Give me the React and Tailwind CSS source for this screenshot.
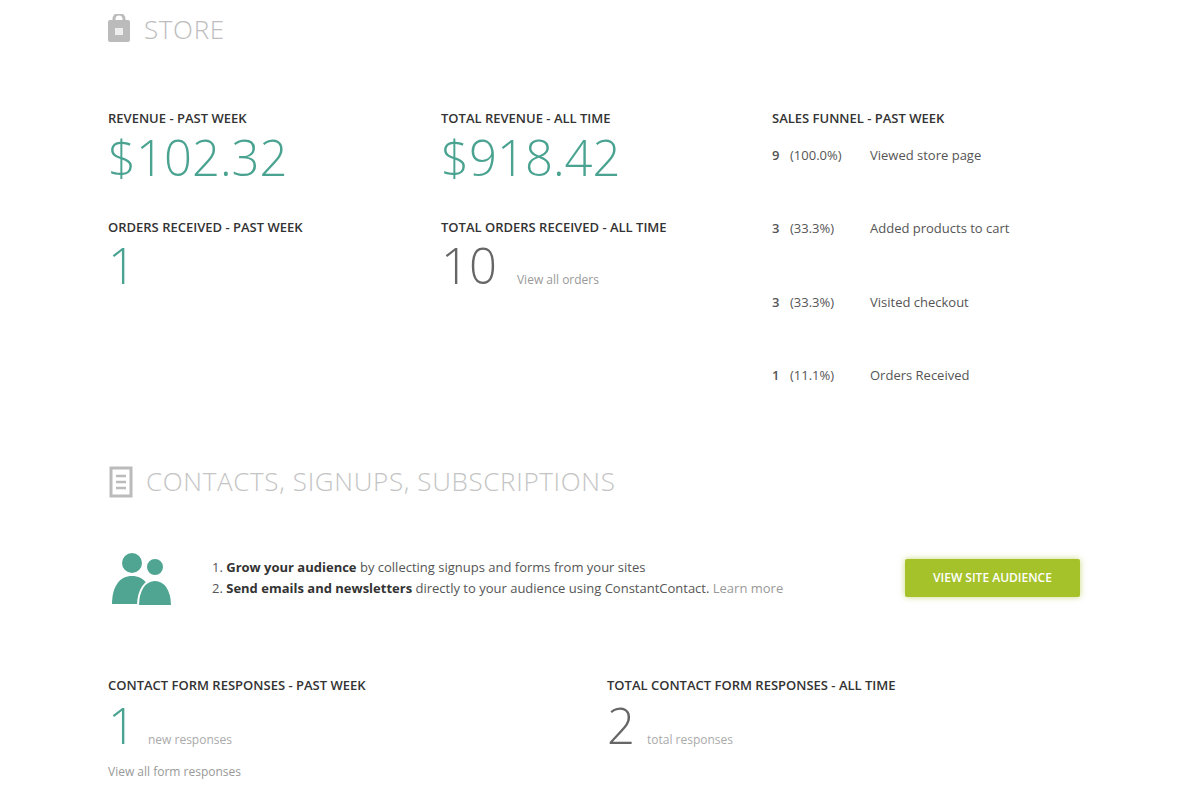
export default function App() {
  const f = { fontFamily: '"Open Sans", "Liberation Sans", sans-serif' };
  const funnel = [
    ["9", "(100.0%)", "Viewed store page"],
    ["3", "(33.3%)", "Added products to cart"],
    ["3", "(33.3%)", "Visited checkout"],
    ["1", "(11.1%)", "Orders Received"],
  ];
  return (
    <div style={f} className="w-[1200px] h-[801px] bg-white overflow-hidden relative pl-[108px] pr-[120px] text-[#333]">
      <div className="flex items-center gap-3 h-[58px] -ml-[2px]">
        <svg width="26" height="30" viewBox="0 0 26 30"><rect x="2" y="6" width="22" height="22" rx="2" fill="#bbb"/><path d="M8 9V5a5 5 0 0 1 10 0v4" stroke="#bbb" strokeWidth="3" fill="none"/><rect x="9" y="14" width="8" height="7" fill="#eee"/></svg>
        <span className="text-[26px] text-[#bdbdbd] tracking-wide font-light">STORE</span>
      </div>
      <div className="flex mt-[51px]">
        <div className="w-[333px]">
          <div className="text-[13px] font-semibold uppercase">Revenue - Past Week</div>
          <div className="text-[49px] font-light text-[#4aa391] leading-[52px] mt-[2px]">$102.32</div>
          <div className="text-[13px] font-semibold uppercase mt-[35px]">Orders Received - Past Week</div>
          <div className="text-[49px] font-light text-[#4aa391] leading-[52px] mt-[2px]">1</div>
        </div>
        <div className="w-[331px]">
          <div className="text-[13px] font-semibold uppercase">Total Revenue - All Time</div>
          <div className="text-[49px] font-light text-[#4aa391] leading-[52px] mt-[2px]">$918.42</div>
          <div className="text-[13px] font-semibold uppercase mt-[35px]">Total Orders Received - All Time</div>
          <div className="flex items-baseline gap-5 mt-[2px]">
            <span className="text-[49px] font-light text-[#666] leading-[52px]">10</span>
            <span className="text-[12px] text-[#999]">View all orders</span>
          </div>
        </div>
        <div>
          <div className="text-[13px] font-semibold uppercase">Sales Funnel - Past Week</div>
          <div className="flex flex-col gap-[54px] mt-[17px]">
            {funnel.map((r) => (
              <div key={r[2]} className="flex text-[13px] text-[#555]">
                <span className="w-[18px] font-semibold">{r[0]}</span>
                <span className="w-[80px]">{r[1]}</span>
                <span>{r[2]}</span>
              </div>
            ))}
          </div>
        </div>
      </div>
      <div className="flex items-center gap-3 mt-[76px] h-[40px]">
        <svg width="26" height="32" viewBox="0 0 26 32"><rect x="3" y="2" width="20" height="28" fill="none" stroke="#bbb" strokeWidth="3"/><path d="M8 10h10M8 16h10M8 22h10" stroke="#bbb" strokeWidth="2.5"/></svg>
        <span className="text-[26px] text-[#c4c4c4] tracking-wide font-light">CONTACTS, SIGNUPS, SUBSCRIPTIONS</span>
      </div>
      <div className="flex items-center mt-[36px] h-[80px]">
        <svg width="72" height="64" viewBox="0 0 72 64"><circle cx="24" cy="17" r="10" fill="#4fa592"/><path d="M4 58c0-18 8-28 20-28s20 10 20 28z" fill="#4fa592"/><circle cx="47" cy="21" r="9" fill="#4fa592" stroke="#fff" strokeWidth="2"/><path d="M30 60c0-16 7-26 17-26s17 10 17 26z" fill="#4fa592" stroke="#fff" strokeWidth="2"/></svg>
        <div className="ml-[32px] text-[13px] text-[#555] leading-[21px] flex-1">
          <div>1. <b className="text-[#333]">Grow your audience</b> by collecting signups and forms from your sites</div>
          <div>2. <b className="text-[#333]">Send emails and newsletters</b> directly to your audience using ConstantContact. <span className="text-[#999]">Learn more</span></div>
        </div>
        <button className="bg-[#a6c22a] text-white text-[12px] font-semibold uppercase px-[16px] h-[38px] w-[175px] rounded-[2px] shadow-[0_0_6px_rgba(166,194,42,0.6)]">View site audience</button>
      </div>
      <div className="flex mt-[58px]">
        <div className="w-[499px]">
          <div className="text-[13px] font-semibold uppercase">Contact Form Responses - Past Week</div>
          <div className="flex items-baseline gap-3 mt-[2px]">
            <span className="text-[49px] font-light text-[#4aa391] leading-[56px]">1</span>
            <span className="text-[12px] text-[#aaa]">new responses</span>
          </div>
          <div className="text-[12px] text-[#999] mt-[10px]">View all form responses</div>
        </div>
        <div>
          <div className="text-[13px] font-semibold uppercase">Total Contact Form Responses - All Time</div>
          <div className="flex items-baseline gap-3 mt-[2px]">
            <span className="text-[49px] font-light text-[#666] leading-[56px]">2</span>
            <span className="text-[12px] text-[#aaa]">total responses</span>
          </div>
        </div>
      </div>
    </div>
  );
}
